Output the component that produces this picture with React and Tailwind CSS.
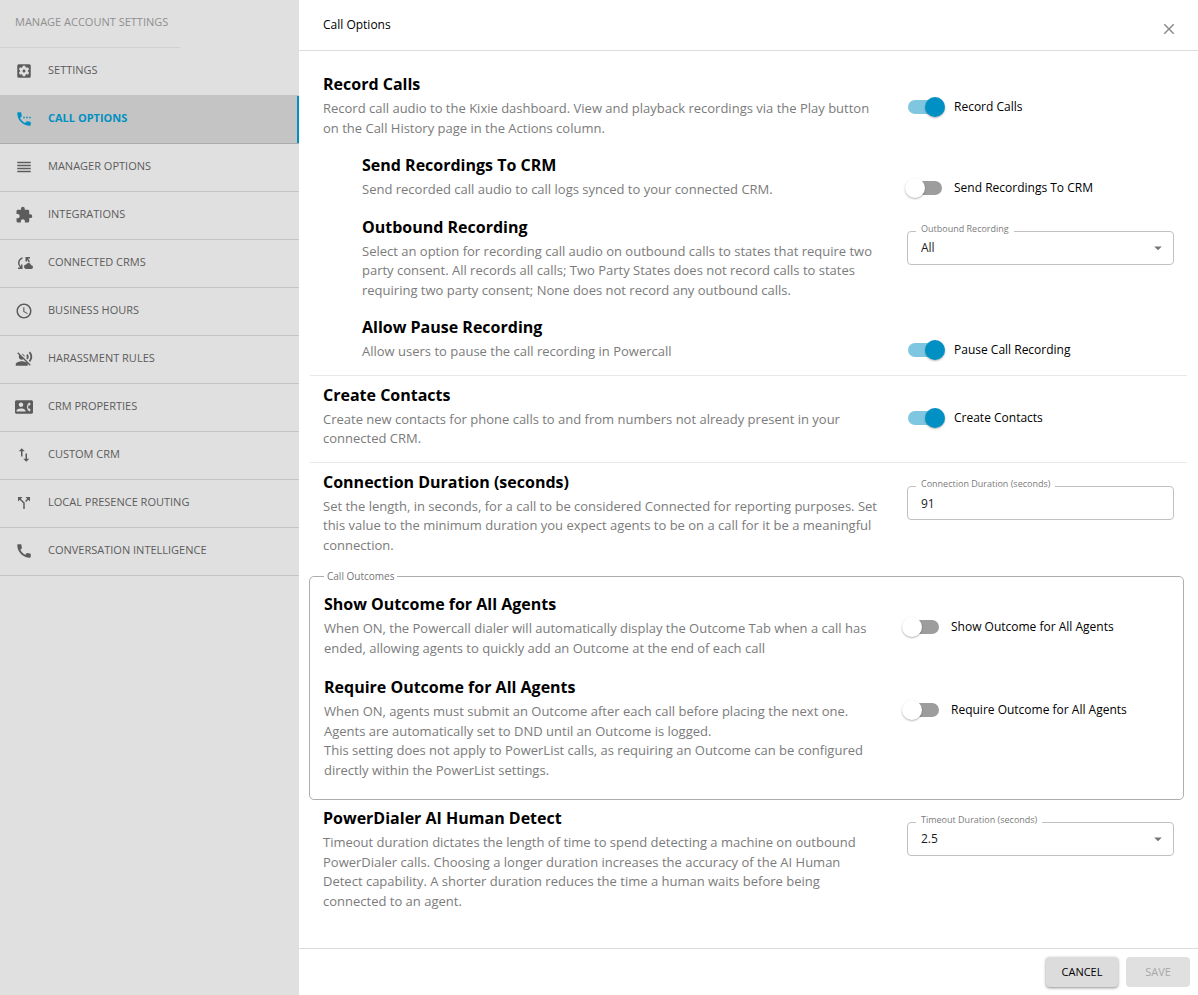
import { useState } from "react";
import {
    MdSettingsApplications,
    MdSettingsPhone,
    MdReorder,
    MdExtension,
    MdCloudSync,
    MdAccessTime,
    MdVoiceOverOff,
    MdContactPhone,
    MdImportExport,
    MdCallSplit,
    MdCall,
    MdClose,
    MdArrowDropDown,
} from "react-icons/md";

const menu = [
    { name: 'Settings', icon: MdSettingsApplications },
    { name: 'Call Options', icon: MdSettingsPhone },
    { name: 'Manager Options', icon: MdReorder },
    { name: 'Integrations', icon: MdExtension },
    { name: 'Connected CRMs', icon: MdCloudSync },
    { name: 'Business Hours', icon: MdAccessTime },
    { name: 'Harassment Rules', icon: MdVoiceOverOff },
    { name: 'CRM Properties', icon: MdContactPhone },
    { name: 'Custom CRM', icon: MdImportExport },
    { name: 'Local Presence Routing', icon: MdCallSplit },
    { name: 'Conversation Intelligence', icon: MdCall },
]

function Sidebar() {
    const [active, setActive] = useState('Call Options')

    return (
        <aside className="w-[299px] shrink-0 bg-[#e0e0e0] text-[11px]">
            <h2 className="w-[180px] h-12 pl-[15px] flex items-center pb-0.5 border-b border-[#d0d0d0] text-[#8f8f8f] whitespace-nowrap">
                MANAGE ACCOUNT SETTINGS
            </h2>
            <nav>
                {menu.map((m) => {
                    const Icon = m.icon
                    const isActive = m.name === active
                    return (
                        <a
                            key={m.name}
                            href="#"
                            onClick={(e) => {
                                e.preventDefault()
                                setActive(m.name)
                            }}
                            className={isActive
                                ? "flex items-center gap-[15px] h-12 pl-[15px] pb-0.5 border-b border-b-[#ababab] bg-[#c4c4c4] shadow-[inset_-2px_0_0_#0090c1] font-bold text-[#0090c1] uppercase"
                                : "flex items-center gap-[15px] h-12 pl-[15px] pb-0.5 border-b border-[#c4c4c4] text-[#5c5c5c] uppercase"}
                        >
                            <Icon size={18} />
                            <span>{m.name}</span>
                        </a>
                    )
                })}
            </nav>
        </aside>
    )
}

function Row({ title, text, indent, className = "pb-[13px] px-[13px]", children }) {
    return (
        <div className={"flex gap-6 " + className}>
            <div className={indent ? "flex-1 pl-[39px]" : "flex-1"}>
                <h3 className="text-base leading-7 font-bold text-black">{title}</h3>
                <p className="mt-px text-[13px] leading-normal text-[#7b7b7b] whitespace-pre-line">{text}</p>
            </div>
            <div className="w-[267px] shrink-0">{children}</div>
        </div>
    )
}

function Toggle({ label, on = false }) {
    const [checked, setChecked] = useState(on)

    return (
        <label className="mt-[27px] ml-px h-5 flex items-center gap-3 text-xs text-black cursor-pointer">
            <input
                type="checkbox"
                checked={checked}
                onChange={(e) => setChecked(e.target.checked)}
                className="appearance-none relative shrink-0 w-[34px] h-[14px] rounded-full bg-[#9d9d9d] checked:bg-[#7fc7e0] cursor-pointer before:absolute before:-top-[3px] before:-left-[3px] before:size-5 before:rounded-full before:bg-white before:shadow-[0_1px_2px_rgba(0,0,0,0.3)] checked:before:left-[17px] checked:before:bg-[#0090c4]"
            />
            {label}
        </label>
    )
}

function Field({ id, label, children }) {
    return (
        <div className="relative mt-[18px] h-[34px] text-xs text-[#1c1c1c]">
            <label htmlFor={id} className="absolute -top-2 left-[9px] px-[5px] bg-white text-[9px] leading-3 text-[#7b7b7b]">
                {label}
            </label>
            {children}
        </div>
    )
}

function SelectField({ id, label, options, initial }) {
    const [value, setValue] = useState(initial)

    return (
        <Field id={id} label={label}>
            <select
                id={id}
                value={value}
                onChange={(e) => setValue(e.target.value)}
                className="appearance-none w-full h-full px-[13px] rounded border border-[#c0c0c0] bg-transparent"
            >
                {options.map((o) => <option key={o}>{o}</option>)}
            </select>
            <MdArrowDropDown size={18} className="absolute right-[7px] top-2 text-[#757575] pointer-events-none" />
        </Field>
    )
}

export default function App() {
    const [duration, setDuration] = useState('91')

    return (
        <div className="flex h-screen bg-white font-['Open_Sans',sans-serif]">
            <Sidebar />
            <main className="flex-1 min-w-0 flex flex-col">
                <header className="flex justify-between h-[51px] shrink-0 pl-6 pr-5 border-b border-[#dcdcdc]">
                    <h1 className="self-center text-xs text-black">Call Options</h1>
                    <button aria-label="Close" className="pt-2 text-[#8c8c8c] cursor-pointer">
                        <MdClose size={18} />
                    </button>
                </header>

                <div className="flex-1 overflow-y-auto px-[11px] pt-[19px]">
                    <section className="border-b border-[#e8e8e8]">
                        <Row
                            title="Record Calls"
                            text="Record call audio to the Kixie dashboard. View and playback recordings via the Play button on the Call History page in the Actions column."
                        >
                            <Toggle label="Record Calls" on />
                        </Row>
                        <Row
                            indent
                            title="Send Recordings To CRM"
                            text="Send recorded call audio to call logs synced to your connected CRM."
                        >
                            <Toggle label="Send Recordings To CRM" />
                        </Row>
                        <Row
                            indent
                            title="Outbound Recording"
                            text="Select an option for recording call audio on outbound calls to states that require two party consent. All records all calls; Two Party States does not record calls to states requiring two party consent; None does not record any outbound calls."
                        >
                            <SelectField
                                id="outbound"
                                label="Outbound Recording"
                                options={['All', 'Two Party States', 'None']}
                                initial="All"
                            />
                        </Row>
                        <Row
                            indent
                            title="Allow Pause Recording"
                            text="Allow users to pause the call recording in Powercall"
                        >
                            <Toggle label="Pause Call Recording" on />
                        </Row>
                    </section>

                    <section className="pt-[5px] border-b border-[#e8e8e8]">
                        <Row
                            title="Create Contacts"
                            text="Create new contacts for phone calls to and from numbers not already present in your connected CRM."
                        >
                            <Toggle label="Create Contacts" on />
                        </Row>
                    </section>

                    <section className="pt-[5px]">
                        <Row
                            title="Connection Duration (seconds)"
                            text="Set the length, in seconds, for a call to be considered Connected for reporting purposes. Set this value to the minimum duration you expect agents to be on a call for it be a meaningful connection."
                        >
                            <Field id="duration" label="Connection Duration (seconds)">
                                <input
                                    id="duration"
                                    type="text"
                                    value={duration}
                                    onChange={(e) => setDuration(e.target.value)}
                                    className="w-full h-full px-[13px] pt-0.5 rounded border border-[#c0c0c0] bg-transparent"
                                />
                            </Field>
                        </Row>
                    </section>

                    <fieldset className="-ml-px mr-[3px] mt-px pt-[6px] pb-1 rounded-[5px] border border-[#adadad]">
                        <legend className="ml-[14px] px-[3px] text-[10px] leading-[15px] text-[#757575]">Call Outcomes</legend>
                        <Row
                            className="pb-[15px] pl-[14px] pr-3"
                            title="Show Outcome for All Agents"
                            text="When ON, the Powercall dialer will automatically display the Outcome Tab when a call has ended, allowing agents to quickly add an Outcome at the end of each call"
                        >
                            <Toggle label="Show Outcome for All Agents" />
                        </Row>
                        <Row
                            className="pb-[15px] pl-[14px] pr-3"
                            title="Require Outcome for All Agents"
                            text={"When ON, agents must submit an Outcome after each call before placing the next one. Agents are automatically set to DND until an Outcome is logged.\nThis setting does not apply to PowerList calls, as requiring an Outcome can be configured directly within the PowerList settings."}
                        >
                            <Toggle label="Require Outcome for All Agents" />
                        </Row>
                    </fieldset>

                    <section className="pt-1">
                        <Row
                            title="PowerDialer AI Human Detect"
                            text="Timeout duration dictates the length of time to spend detecting a machine on outbound PowerDialer calls. Choosing a longer duration increases the accuracy of the AI Human Detect capability. A shorter duration reduces the time a human waits before being connected to an agent."
                        >
                            <SelectField
                                id="timeout"
                                label="Timeout Duration (seconds)"
                                options={['1.5', '2', '2.5', '3']}
                                initial="2.5"
                            />
                        </Row>
                    </section>
                </div>

                <footer className="flex justify-end gap-2 p-2 shrink-0 border-t border-[#dcdcdc] text-[11px] font-medium">
                    <button className="w-[72px] h-[30px] rounded bg-[#dcdcdc] text-black shadow-[0_1px_3px_rgba(0,0,0,0.45)] cursor-pointer">
                        CANCEL
                    </button>
                    <button disabled className="w-16 h-[30px] rounded bg-[#e0e0e0] text-[#a8a8a8]">
                        SAVE
                    </button>
                </footer>
            </main>
        </div>
    );
}
